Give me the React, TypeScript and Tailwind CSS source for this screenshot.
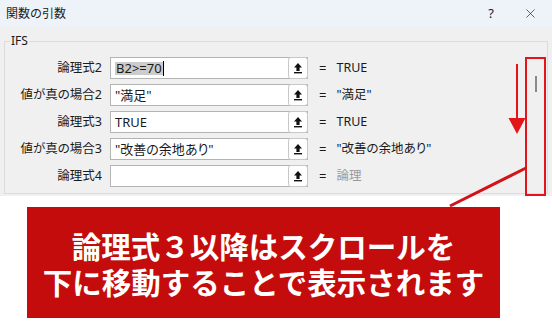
import React from "react";
import { X } from "lucide-react";

const UpIcon = () => (
  <svg width="10" height="12" viewBox="0 0 10 12">
    <path d="M5 1 L9 5.5 H6.6 V9 H3.4 V5.5 H1 Z" fill="#111" />
    <rect x="1" y="10" width="8" height="1.4" fill="#111" />
  </svg>
);

type Row = { label: string; value: string; result: string; selected?: boolean; gray?: boolean };

const rows: Row[] = [
  { label: "論理式2", value: "B2>=70", result: "TRUE", selected: true },
  { label: "値が真の場合2", value: "\"満足\"", result: "\"満足\"" },
  { label: "論理式3", value: "TRUE", result: "TRUE" },
  { label: "値が真の場合3", value: "\"改善の余地あり\"", result: "\"改善の余地あり\"" },
  { label: "論理式4", value: "", result: "論理", gray: true },
];

export default function App() {
  return (
    <div className="relative w-[552px] h-[331px] bg-white overflow-hidden font-['Noto_Sans','Noto_Sans_CJK_JP',sans-serif] text-[#1a1a1a]">
      {/* title bar */}
      <div className="h-[27px] bg-[#eef2f9] flex items-center pl-[6px] pr-[14px]">
        <span className="text-[12px] leading-none">関数の引数</span>
        <span className="ml-auto text-[13px] leading-none mr-[29px]">?</span>
        <X size={15} strokeWidth={1.1} color="#222" />
      </div>
      {/* body */}
      <div className="h-[169px] bg-[#f0f0f0] pt-[7px] px-[4px]">
        <fieldset className="border border-[#dcdcdc] h-[160px] pt-[9px] pb-[5px]">
          <legend className="ml-[5px] px-[1px] text-[12px] leading-[14px]">IFS</legend>
          <div className="flex flex-col gap-[5px]">
            {rows.map((r, i) => (
              <div key={i} className="flex items-center h-[22px]">
                <div className="w-[98px] text-right text-[12.5px] leading-none [font-feature-settings:'palt'] pr-[1px]">
                  {r.label}
                </div>
                <div className="ml-[7px] w-[198px] h-[22px] bg-white border border-[#b4b4b4] flex items-center">
                  <div className="flex-1 pl-[4px] text-[13px] leading-none flex items-center">
                    {r.selected ? (
                      <>
                        <span className="bg-[#cccccc] px-[1px]">{r.value}</span>
                        <span className="w-[1px] h-[15px] bg-black" />
                      </>
                    ) : (
                      <span className="[font-feature-settings:'palt']">{r.value}</span>
                    )}
                  </div>
                  <div className="w-[20px] h-[22px] -mr-[1px] border border-[#c8c8c8] rounded-[3px] bg-white flex items-center justify-center">
                    <UpIcon />
                  </div>
                </div>
                <span className="ml-[11px] text-[13px] leading-none">=</span>
                <span
                  className={`ml-[10px] text-[12.5px] leading-none [font-feature-settings:'palt'] ${
                    r.gray ? "text-[#9a9a9a]" : ""
                  }`}
                >
                  {r.result}
                </span>
              </div>
            ))}
          </div>
        </fieldset>
      </div>

      {/* annotation box */}
      <div className="mt-[11px] ml-[27px] w-[473px] h-[111px] bg-[#c40c0c] flex flex-col items-center justify-center text-white font-bold text-[29.5px] leading-[36px] font-['Noto_Sans_CJK_JP',sans-serif]">
        <div>論理式３以降はスクロールを</div>
        <div>下に移動することで表示されます</div>
      </div>

      {/* scrollbar thumb */}
      <div className="absolute left-[535px] top-[76px] w-[2px] h-[16px] bg-[#8a8a8a]" />

      {/* red highlight overlays */}
      <div className="absolute left-[525px] top-[57px] w-[21px] h-[139px] border-2 border-[#e3151b]" />
      <svg className="absolute left-0 top-0" width="552" height="331" viewBox="0 0 552 331">
        <line x1="450" y1="206" x2="526" y2="168" stroke="#d11418" strokeWidth="3" />
        <line x1="517" y1="64" x2="517" y2="120" stroke="#e3151b" strokeWidth="2" />
        <path d="M508.5 118 L525.5 118 L517 134 Z" fill="#e3151b" />
      </svg>
    </div>
  );
}
